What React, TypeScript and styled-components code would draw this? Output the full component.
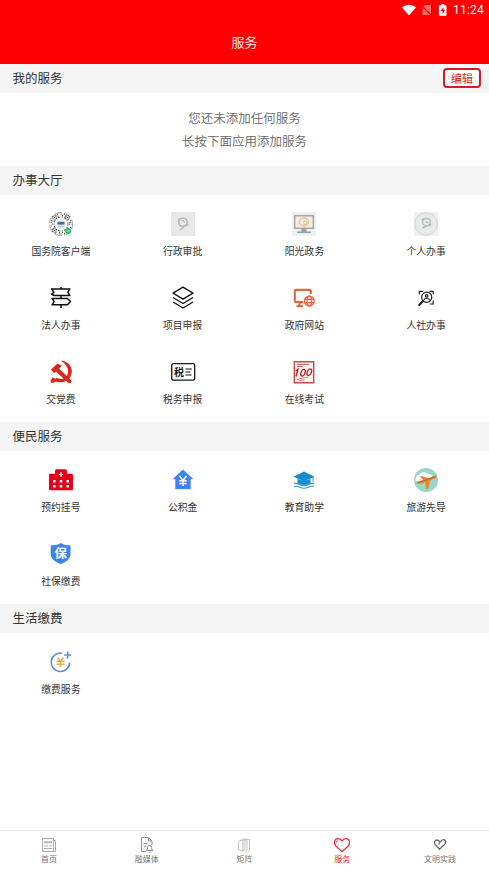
import React from 'react';
import styled, { createGlobalStyle } from 'styled-components';

const GlobalStyle = createGlobalStyle`
  * { box-sizing: border-box; }
  body { margin: 0; background: #fff; font-family: "Noto Sans CJK SC", "Noto Sans", sans-serif; }
`;

const Screen = styled.div`
  display: flex;
  flex-direction: column;
  height: 871px;
  background: #fff;
  color: #333;
  overflow: hidden;
`;
const Header = styled.header`
  height: 64px;
  flex: none;
  background: #fe0000;
  color: #fff;
`;
const StatusBar = styled.div`
  height: 20px;
  display: flex;
  justify-content: flex-end;
  align-items: center;
  padding-right: 6px;
  svg { display: block; }
`;
const Clock = styled.span`
  font: 400 12px/20px Roboto, sans-serif;
  letter-spacing: 0.2px;
  width: 30px;
  white-space: nowrap;
`;
const StatusIcons = styled.div`
  display: flex;
  align-items: center;
  margin-right: 6px;
`;
const Title = styled.h1`
  margin: 0;
  font-size: 13px;
  font-weight: 350;
  line-height: 44px;
  text-align: center;
`;
const SectionBar = styled.div`
  height: 29px;
  flex: none;
  display: flex;
  align-items: center;
  justify-content: space-between;
  padding: 0 8px 1px 12.5px;
  background: #f5f5f5;
`;
const SectionTitle = styled.h2`
  margin: 0;
  font-size: 12.5px;
  font-weight: 400;
  line-height: 26px;
`;
const EditButton = styled.button`
  width: 38px;
  height: 20px;
  padding: 0;
  border: 2px solid #d51c24;
  border-radius: 4px;
  background: #fff;
  color: #d51c24;
  font: 400 11px/15px "Noto Sans CJK SC", sans-serif;
`;
const EmptyNote = styled.div`
  height: 73px;
  flex: none;
  padding-top: 13px;
  text-align: center;
  color: #666;
  font-size: 12.5px;
  font-weight: 350;
  line-height: 23px;
`;
const Grid = styled.div`
  display: grid;
  grid-template-columns: repeat(4, 1fr);
  grid-auto-rows: 74px;
  padding: 0 2px 5px 0;
`;
const Service = styled.div`
  display: flex;
  flex-direction: column;
  align-items: center;
  padding-top: 17px;
  svg { display: block; overflow: visible; }
`;
const ServiceName = styled.span`
  margin-top: 8px;
  font-size: 9.8px;
  line-height: 15px;
  white-space: nowrap;
`;
const TabBar = styled.nav`
  margin-top: auto;
  height: 41px;
  flex: none;
  display: grid;
  grid-template-columns: repeat(5, 1fr);
  border-top: 1px solid #e9e9e9;
`;
const Tab = styled.div<{ $active?: boolean }>`
  display: flex;
  flex-direction: column;
  align-items: center;
  padding-top: 6px;
  color: ${(p) => (p.$active ? '#ef1c2c' : '#777')};
  svg { display: block; overflow: visible; }
`;
const TabName = styled.span`
  font-size: 8px;
  line-height: 12px;
  white-space: nowrap;
`;

const Svg = ({ children, size = 24 }: { children: React.ReactNode; size?: number }) => (
  <svg width={size} height={size} viewBox={`0 0 ${size} ${size}`} fill="none">{children}</svg>
);

/* Rays of short and long dots arranged around the central badge. */
const codeDots = Array.from({ length: 36 }).flatMap((_, i) =>
  [7, 8.5, 10, 11.5].filter((_, j) => (i * 7 + j * 5 + i * i * j) % 5 < 3).map((r) => ({
    x: 12 + r * Math.cos((i * Math.PI) / 18),
    y: 12 + r * Math.sin((i * Math.PI) / 18),
  }))
);
const CodeIcon = () => (
  <Svg>
    {codeDots.map((d, i) => <circle key={i} cx={d.x} cy={d.y} r="0.6" fill="#444" />)}
    {[[5.5, 5.5], [18.5, 5.5], [5.5, 18.5]].map(([x, y]) => (
      <g key={`${x}-${y}`}><circle cx={x} cy={y} r="1.9" fill="#fff" stroke="#555" strokeWidth="0.7" /><circle cx={x} cy={y} r="0.8" fill="#444" /></g>
    ))}
    <circle cx="12" cy="12" r="5.6" fill="#e9f1f5" />
    <path d="M8.5 9.8h7v2.8h-7z" fill="#32719b" />
    <path d="M9 14.500h6" stroke="#b9cedb" />
    <circle cx="19" cy="19" r="3" fill="#2fc26b" />
    <path d="M17.600 19l1 1 1.800-2" stroke="#c4f2d6" strokeWidth="0.800" />
  </Svg>
);
const ApprovalIcon = () => (
  <Svg>
    <path d="M0 0h24v24H0z" fill="#e8e8e8" />
    <circle cx="12" cy="10.300" r="4.200" stroke="#bdbdbd" strokeWidth="1.900" />
    <path d="M7 8.500l2-2.500M10.500 9c2-.8 3 .2 2.800 1.500M14 12.500l3.500.8M12.500 15c-.7 1.500-2 2.400-4 3" stroke="#b7b7b7" strokeWidth="1.300" />
  </Svg>
);
const SunIcon = () => (
  <Svg>
    <path d="M0 0h24v24H0z" fill="#efefef" />
    <path d="M2.700 3.700h18.600v12.600H2.700z" fill="#f2efe5" stroke="#a3a8ac" strokeWidth="1.500" />
    <ellipse cx="12" cy="10" rx="4.700" ry="3.900" stroke="#e9c5a3" strokeWidth="1.500" />
    <path d="M11 10.500c.5-2 4-2 4 .2s-2.500 2-4 1" stroke="#d3cf8f" strokeWidth="1.300" />
    <path d="M9.500 17h5v2.500h-5zM5 19.500h14V21H5z" fill="#989da1" />
  </Svg>
);
const PersonIcon = () => (
  <Svg>
    <path d="M0 0h24v24H0z" fill="#f0f0f0" />
    <circle cx="12" cy="12" r="11.300" fill="#e9ebea" stroke="#c7cbca" strokeWidth="0.800" />
    <circle cx="12.500" cy="10.200" r="3.900" stroke="#b4c8c1" strokeWidth="1.700" />
    <path d="M7.800 8.500l2-2M11.500 9.500l3 1.500M14.500 12.500l3 .7M12.500 14c-1 1-2 1.600-4.200 1.800" stroke="#9fb9b1" strokeWidth="1.300" />
  </Svg>
);
const SignIcon = () => (
  <Svg>
    <path d="M12 1v2M12 9.500v3M12 18.800V22M2.500 3h18.300l-2 3.200 2 3.300H5l-2.500-1.500L5 6.300zM3 12.500h15.500l3 3-3 3.300H3l2.200-3.200z" stroke="#111" strokeWidth="1.500" strokeLinejoin="round" />
  </Svg>
);
const LayersIcon = () => (
  <Svg>
    <path d="M12 1.200l10 6-10 6-10-6zM2 11.500l10 6 10-6M2 16l10 6 10-6" stroke="#151515" strokeWidth="1.400" strokeLinejoin="round" />
  </Svg>
);
const WebsiteIcon = () => (
  <Svg>
    <path d="M11 16H3.800c-.6 0-1-.4-1-1V4.900c0-.6.400-1 1-1h14c.6 0 1 .4 1 1V8M8.200 16.500L6.700 20M4.500 20.300H11" stroke="#ee6042" strokeWidth="2.100" />
    <circle cx="17.300" cy="15" r="4.900" fill="#fff0ec" />
    <g stroke="#ee6042" strokeWidth="1.200"><circle cx="17.300" cy="15" r="4.900" /><ellipse cx="17.300" cy="15" rx="2.200" ry="4.900" /><path d="M12.400 13.300h9.800M12.400 16.700h9.800" /></g>
  </Svg>
);
const SearchPersonIcon = () => (
  <Svg>
    <g stroke="#222" strokeWidth="1.200">
      <circle cx="12.700" cy="11.300" r="5.100" />
      <circle cx="12.700" cy="9.900" r="1.300" />
      <path d="M9.800 14.300c.5-2.400 5.300-2.400 5.800 0" />
      <path d="M5.300 8.500V5.300H9M15.500 5.300h3.700v3M19.200 14.500V18h-3.500" />
    </g>
    <path d="M9 15l-3.800 4" stroke="#222" strokeWidth="2.100" strokeLinecap="round" />
  </Svg>
);
const PartyIcon = () => (
  <Svg>
    <g fill="#dc251c">
      <path d="M11.500.5C20.500 1.300 25 8.500 22 15.500c-2.300 5.600-9.500 9-16.700 5.300l1.900-3c4.800 2.200 9.300 1 11.100-2.800C20.700 9.900 17.500 4 11.500.5z" />
      <path d="M2 9.600L8.300 3.700l4.600 1.700-2.700 3.400 11.300 10.600-2.700 3L7 11.500 5 13.300z" />
      <path d="M3.500 17l4.200 2.800-1.700 2.500-3.300-.5z" />
      <circle cx="3.400" cy="21" r="1.900" /><circle cx="20.500" cy="21.300" r="1.900" />
    </g>
  </Svg>
);
const TaxIcon = () => (
  <Svg>
    <rect x="0.700" y="3.700" width="23" height="16.500" rx="1.800" stroke="#171717" strokeWidth="1.300" />
    <text x="3" y="15.600" fontSize="10" fontWeight="700" fill="#171717">税</text>
    <path d="M14.500 9h6.300M14.500 12h4.800M14.500 15h6" stroke="#171717" strokeWidth="1.200" />
  </Svg>
);
const ExamIcon = () => (
  <Svg>
    <path d="M2.300 1.700h19.400v21H2.300z" fill="#fff6f4" stroke="#c84a43" strokeWidth="1.400" />
    <path d="M5 4.300h12M5 6.300h6" stroke="#d1473e" strokeWidth="1.100" />
    <path d="M3.500 11l2.500-1.700-2 7.200" stroke="#bd211b" strokeWidth="1.400" />
    <ellipse cx="11" cy="12.700" rx="2" ry="3.500" transform="rotate(22 11 12.700)" stroke="#bd211b" strokeWidth="1.300" />
    <ellipse cx="17.300" cy="12.200" rx="2" ry="3.500" transform="rotate(25 17.300 12.200)" stroke="#bd211b" strokeWidth="1.300" />
    <path d="M5 19.700c4-1.500 7-2 11-2.200M7.500 20.600l5-1" stroke="#d9655f" strokeWidth="0.900" />
  </Svg>
);
const HospitalIcon = () => (
  <Svg>
    <path d="M1.500 5.700H6V3c0-1 .6-1.800 1.700-1.800h8.600C17.400 1.200 18 2 18 3v2.700h4.500c1 0 1.500.5 1.500 1.500v13.600c0 1-.5 1.500-1.500 1.500h-21c-1 0-1.500-.5-1.500-1.500V7.200c0-1 .5-1.500 1.500-1.500z" fill="#e60019" />
    <path d="M12 4.300v4.400M9.800 6.500h4.400" stroke="#fff" strokeWidth="1.200" />
    <path d="M4 12h2.500v2.500H4zM10.800 12h2.500v2.500h-2.500zM17.500 12H20v2.500h-2.500zM4 17h2.500v2.500H4zM10.800 17h2.500v2.500h-2.500zM17.500 17H20v2.500h-2.500z" fill="#fff" />
  </Svg>
);
const FundIcon = () => (
  <Svg>
    <path d="M4 19h16l2 3H2z" fill="#dbe9fd" />
    <path d="M12 1.500l10.500 9.700h-2.800V20c0 .5-.3.900-.9.900H5.200c-.6 0-.9-.4-.9-.9v-8.800H1.500z" fill="#3f83f3" />
    <path d="M8.500 8l3.500 4.500L15.500 8M12 12.500v5.500M8.300 12.700h7.400M8.300 15.400h7.400" stroke="#fff" strokeWidth="1.500" />
  </Svg>
);
const EducationIcon = () => (
  <Svg>
    <path d="M12 3.500l10.500 5.200L12 13.500 1.500 8.700z" fill="#168ccc" />
    <path d="M5.500 11l6.500 2 6.500-2v4.600c-2 .2-3.500 1.300-6.500 1.300s-4.500-1.100-6.500-1.300z" fill="#168ccc" />
    <path d="M21 9v4.500" stroke="#168ccc" />
    <path d="M2 15.500c4-.8 6 2.100 10 2.100s6-2.900 10-2.100M2 18.500c4-1 6 1.700 10 1.700s6-2.700 10-1.700" stroke="#2b9bd4" strokeWidth="1.100" />
  </Svg>
);
const TravelIcon = () => (
  <Svg>
    <circle cx="12" cy="12" r="12" fill="#98d5ca" />
    <path d="M2 10c0-3 3-3 4-4 2-3 6-2 7 0 3-1 4 1 6 2l-5 5H3c-2 0-2-2-1-3z" fill="#fff" />
    <path d="M1.700 15l2.800-1.300 5-2-3.700-2.900 2-.7 6.500 2.100L20 7.800c2.200-.8 3.500.5 1.700 1.900L16.300 12.500 14 20.500l-2 .7-.8-7-5.400 1.800z" fill="#ed8422" />
    <path d="M4 14.800L21 8.800" stroke="#a55d2a" strokeWidth="0.800" />
  </Svg>
);
const ShieldIcon = () => (
  <Svg>
    <path d="M5 19.500c3 3.500 10 3.500 13 0L11.500 23z" fill="#c9defb" />
    <path d="M11.700 1c3 2 6.300 2.300 9.800 2.500V12c0 5-4.500 8-9.800 10C6.500 20 1.700 17 1.700 12V3.500C5.500 3.200 8.700 3 11.700 1z" fill="#3f83ef" />
    <text x="5.400" y="15.700" fontSize="12.500" fontWeight="700" fill="#fff">保</text>
  </Svg>
);
const PaymentIcon = () => (
  <Svg>
    <path d="M13 3.200A9.200 9.200 0 1 0 20.600 12.500" stroke="#5f8ce0" strokeWidth="1.600" />
    <path d="M18.700 1.500v7M15.200 5h7" stroke="#5f8ce0" strokeWidth="1.600" />
    <path d="M8.500 7.500l3 4 3-4M11.500 11.500V17M7.500 11.300h8M7.500 14.200h8" stroke="#eeaa55" strokeWidth="1.600" />
  </Svg>
);

const HomeTabIcon = () => (
  <Svg size={16}><g stroke="#999" strokeWidth="0.800"><path d="M1.500 1.500h11v13h-11zM12.500 3.500h2v11h-2M3 9h4M3 11.500h8M8.500 9H11" /><path d="M3.300 5.300h7.400" strokeWidth="2" strokeDasharray="1.500 .5" /></g></Svg>
);
const MediaTabIcon = () => (
  <Svg size={16}><g stroke="#858585" strokeWidth="0.900"><path d="M7 14.500H2.500v-14h7l3.500 3.500V8M9.500.5V4H13M4.500 6.500h4M4.500 9h2.500" /><path d="M7.200 13.500h6.800l-1.300-1.500v-1.500a2.100 2.100 0 0 0-4.200 0V12zM9.500 15.200h2.300" /></g></Svg>
);
const MatrixTabIcon = () => (
  <Svg size={16}><path d="M2.500 4.200l4.500-1.200v11.500l-4.500-2zM4.500 3.200L9 1.500v11l-2 1M8 3.500L11 2v11.500l-1.500 1M11 2.500h2.500v11L12 14.500" stroke="#aaa" strokeWidth="0.700" /></Svg>
);
const HeartTabIcon = () => (
  <Svg size={16}><path d="M8 14.700L1.800 9C-1 6 .7 1.600 4 1.600c2 0 3.200 1 4 2.300.8-1.300 2-2.300 4-2.300 3.300 0 5 4.400 2.200 7.400z" stroke="#ef1c2c" strokeWidth="1.100" /><path d="M2 5.800c.2-1.300 1-2 2.200-2.200" stroke="#ef1c2c" strokeWidth="0.800" /></Svg>
);
const PracticeTabIcon = () => (
  <Svg size={16}><path d="M7.500 12.200L3.200 7.500C1.500 5.300 3 3 4.900 3c1.600 0 2.400 1 3.100 2.200C9 3.700 10.300 2.300 12 2.600c1.800.5 2.200 2.700.8 4.500zM8 5.200L6.800 7.500" stroke="#666" strokeWidth="1.300" /></Svg>
);

type Entry = { name: string; Icon: React.FC };
const hall: Entry[] = [
  { name: '国务院客户端', Icon: CodeIcon },
  { name: '行政审批', Icon: ApprovalIcon },
  { name: '阳光政务', Icon: SunIcon },
  { name: '个人办事', Icon: PersonIcon },
  { name: '法人办事', Icon: SignIcon },
  { name: '项目申报', Icon: LayersIcon },
  { name: '政府网站', Icon: WebsiteIcon },
  { name: '人社办事', Icon: SearchPersonIcon },
  { name: '交党费', Icon: PartyIcon },
  { name: '税务申报', Icon: TaxIcon },
  { name: '在线考试', Icon: ExamIcon },
];
const convenience: Entry[] = [
  { name: '预约挂号', Icon: HospitalIcon },
  { name: '公积金', Icon: FundIcon },
  { name: '教育助学', Icon: EducationIcon },
  { name: '旅游先导', Icon: TravelIcon },
  { name: '社保缴费', Icon: ShieldIcon },
];
const living: Entry[] = [{ name: '缴费服务', Icon: PaymentIcon }];
const tabs: Entry[] = [
  { name: '首页', Icon: HomeTabIcon },
  { name: '融媒体', Icon: MediaTabIcon },
  { name: '矩阵', Icon: MatrixTabIcon },
  { name: '服务', Icon: HeartTabIcon },
  { name: '文明实践', Icon: PracticeTabIcon },
];

const ServiceSection = ({ title, items }: { title: string; items: Entry[] }) => (
  <>
    <SectionBar><SectionTitle>{title}</SectionTitle></SectionBar>
    <Grid>
      {items.map(({ name, Icon }) => (
        <Service key={name}><Icon /><ServiceName>{name}</ServiceName></Service>
      ))}
    </Grid>
  </>
);

export default function App() {
  return (
    <>
      <GlobalStyle />
      <Screen>
        <Header>
          <StatusBar>
            <StatusIcons>
              <svg width="45" height="14" viewBox="0 0 45 14">
                <path d="M0 4.500C4 .7 10 .7 14 4.500L7 12.500z" fill="#fff" />
                <path d="M20.500 4.500L23 2h6v10h-8.500z" fill="#ff6d6d" />
                <path d="M19.500 2.500l10 10" stroke="#fe0000" strokeWidth="1.200" />
                <path d="M37.500 2.300h1.700V1h3v1.300h1.700c.3 0 .6.300.6.600V12c0 .4-.3.700-.6.700h-6.400c-.4 0-.6-.3-.6-.7V2.900c0-.3.200-.6.600-.6z" fill="#fff" />
                <path d="M41.500 4l-3 4h2v3l2.800-4.200h-1.800z" fill="#e3001b" />
              </svg>
            </StatusIcons>
            <Clock>11:24</Clock>
          </StatusBar>
          <Title>服务</Title>
        </Header>
        <SectionBar>
          <SectionTitle>我的服务</SectionTitle>
          <EditButton>编辑</EditButton>
        </SectionBar>
        <EmptyNote>
          <div>您还未添加任何服务</div>
          <div>长按下面应用添加服务</div>
        </EmptyNote>
        <ServiceSection title="办事大厅" items={hall} />
        <ServiceSection title="便民服务" items={convenience} />
        <ServiceSection title="生活缴费" items={living} />
        <TabBar>
          {tabs.map(({ name, Icon }) => (
            <Tab key={name} $active={name === '服务'}><Icon /><TabName>{name}</TabName></Tab>
          ))}
        </TabBar>
      </Screen>
    </>
  );
}
